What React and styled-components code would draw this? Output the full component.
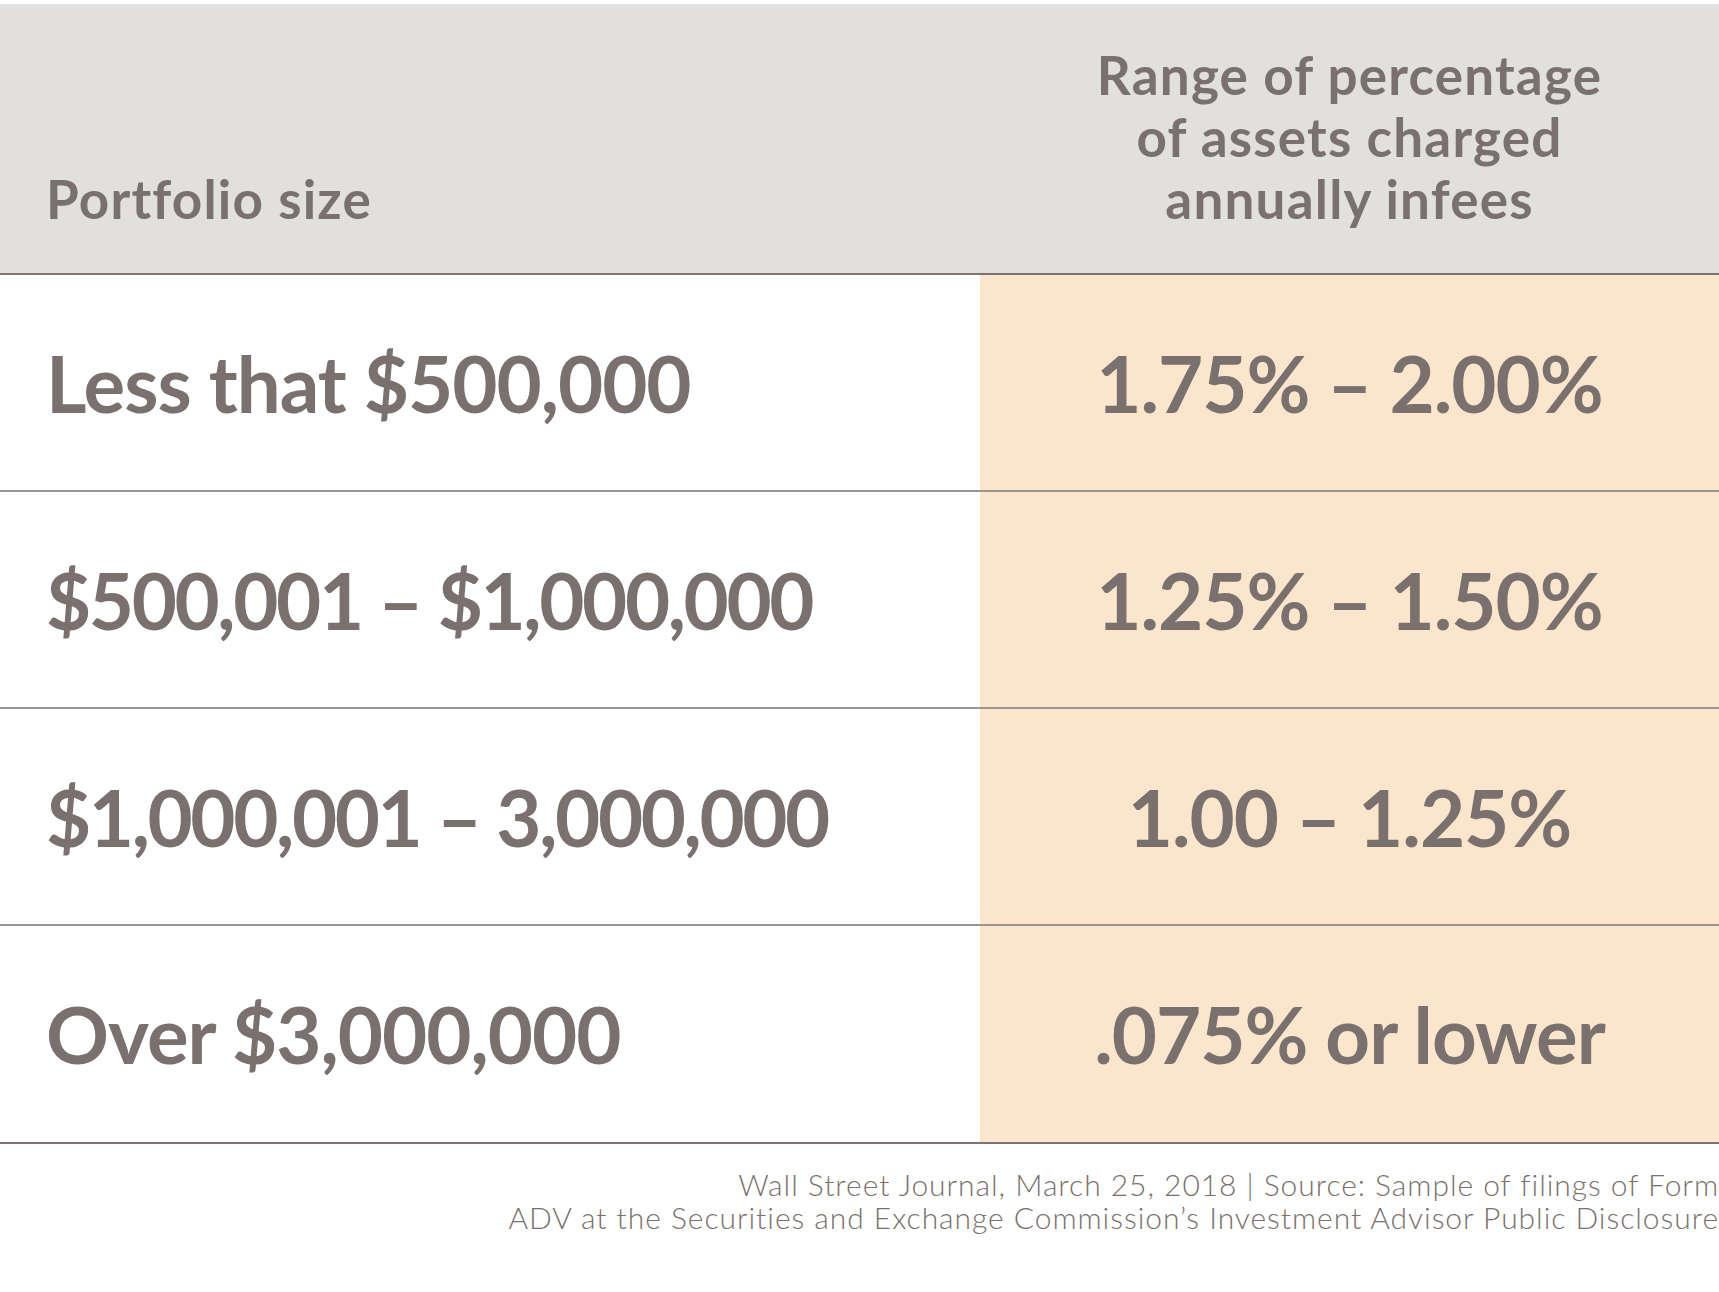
import React from "react";
import styled, { createGlobalStyle } from "styled-components";

const Global = createGlobalStyle`
  html, body { margin: 0; padding: 0; background: #ffffff; }
  body { font-family: "Lato", "Liberation Sans", sans-serif; color: #7a706d; }
`;

const Page = styled.div`
  width: 1719px;
  height: 1292px;
  padding-top: 4px;
  box-sizing: border-box;
  overflow: hidden;
  background: #ffffff;
`;

const Table = styled.div`
  display: grid;
  grid-template-columns: 980px 1fr;
`;

const HeadCell = styled.div`
  height: 271px;
  box-sizing: border-box;
  background: #e1e0df;
  border-bottom: 2px solid #7d7471;
  display: flex;
  align-items: flex-end;
  justify-content: ${(p) => (p.$center ? "center" : "flex-start")};
  text-align: ${(p) => (p.$center ? "center" : "left")};
  padding: ${(p) => (p.$center ? "0 0 43px 0" : "0 0 43px 46px")};
  font-weight: 700;
  font-size: 53px;
  letter-spacing: 1.2px;
  line-height: 62px;
`;

const Cell = styled.div`
  height: ${(p) => (p.$last ? "218px" : "217px")};
  box-sizing: border-box;
  border-bottom: 2px solid ${(p) => (p.$last ? "#7d7471" : "#9d9592")};
  background: ${(p) => (p.$accent ? "#fce5cd" : "#ffffff")};
  display: flex;
  align-items: center;
  justify-content: ${(p) => (p.$accent ? "center" : "flex-start")};
  padding-left: ${(p) => (p.$accent ? "0" : "46px")};
  font-weight: 700;
  font-size: 78px;
  letter-spacing: ${(p) => (p.$tight ? "-2.4px" : "-1px")};
  white-space: nowrap;
`;

const Footer = styled.div`
  text-align: right;
  padding-top: 24px;
  font-weight: 300;
  font-size: 30px;
  letter-spacing: 0.95px;
  line-height: 33px;
  white-space: nowrap;
`;

const rows = [
  { a: "Less that $500,000", b: "1.75% – 2.00%" },
  { a: "$500,001 – $1,000,000", b: "1.25% – 1.50%", tight: true },
  { a: "$1,000,001 – 3,000,000", b: "1.00 – 1.25%", tight: true },
  { a: "Over $3,000,000", b: ".075% or lower" },
];

export default function App() {
  return (
    <Page>
      <Global />
      <Table>
        <HeadCell>Portfolio size</HeadCell>
        <HeadCell $center>
          Range of percentage
          <br />
          of assets charged
          <br />
          annually infees
        </HeadCell>
        {rows.map((r, i) => {
          const last = i === rows.length - 1;
          return (
            <React.Fragment key={r.a}>
              <Cell $last={last} $tight={r.tight}>{r.a}</Cell>
              <Cell $accent $last={last}>{r.b}</Cell>
            </React.Fragment>
          );
        })}
      </Table>
      <Footer>
        Wall Street Journal, March 25, 2018 | Source: Sample of filings of Form
        <br />
        ADV at the Securities and Exchange Commission’s Investment Advisor Public Disclosure
      </Footer>
    </Page>
  );
}
